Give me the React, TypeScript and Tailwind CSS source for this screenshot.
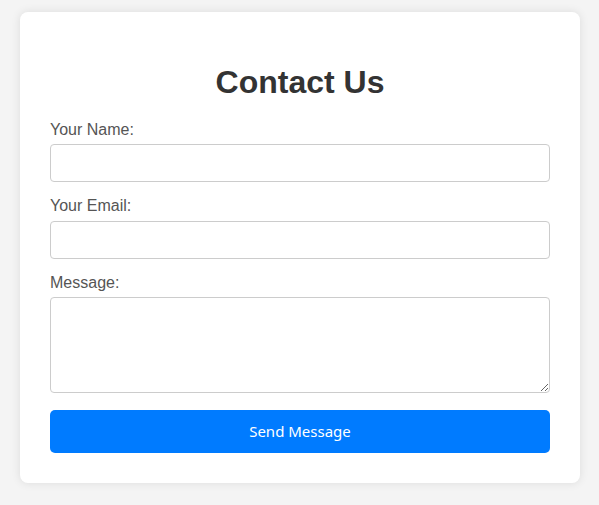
export default function App() {
  return (
    <div className="min-h-[505px] w-full bg-[#f4f4f4] pt-3 pl-5" style={{ fontFamily: '"Liberation Sans", Arial, sans-serif' }}>
      <div className="w-[560px] rounded-lg bg-white px-[30px] pt-[52px] pb-[30px] shadow-[0_0_10px_rgba(0,0,0,0.1)]">
        <h2 className="mb-5 text-center text-[32px] leading-[37px] font-bold text-[#333]">Contact Us</h2>
        <form onSubmit={(e) => e.preventDefault()}>
          <div className="mb-[15px]">
            <label className="mb-[5px] block text-base leading-[18.4px] text-[#555]">Your Name:</label>
            <input type="text" className="block h-[38px] w-full rounded border border-[#ccc] px-2.5 text-base outline-none" />
          </div>
          <div className="mb-[15px]">
            <label className="mb-[5px] block text-base leading-[18.4px] text-[#555]">Your Email:</label>
            <input type="email" className="block h-[38px] w-full rounded border border-[#ccc] px-2.5 text-base outline-none" />
          </div>
          <div className="mb-[17px]">
            <label className="mb-[5px] block text-base leading-[18.4px] text-[#555]">Message:</label>
            <textarea className="block h-[96px] w-full rounded border border-[#ccc] px-2.5 py-2 text-base outline-none" />
          </div>
          <button
            type="submit"
            className="block h-[43px] w-full rounded-[5px] bg-[#007bff] text-[15px] text-white"
            style={{ fontFamily: '"Noto Sans", "Open Sans", sans-serif' }}
          >
            Send Message
          </button>
        </form>
      </div>
    </div>
  );
}
